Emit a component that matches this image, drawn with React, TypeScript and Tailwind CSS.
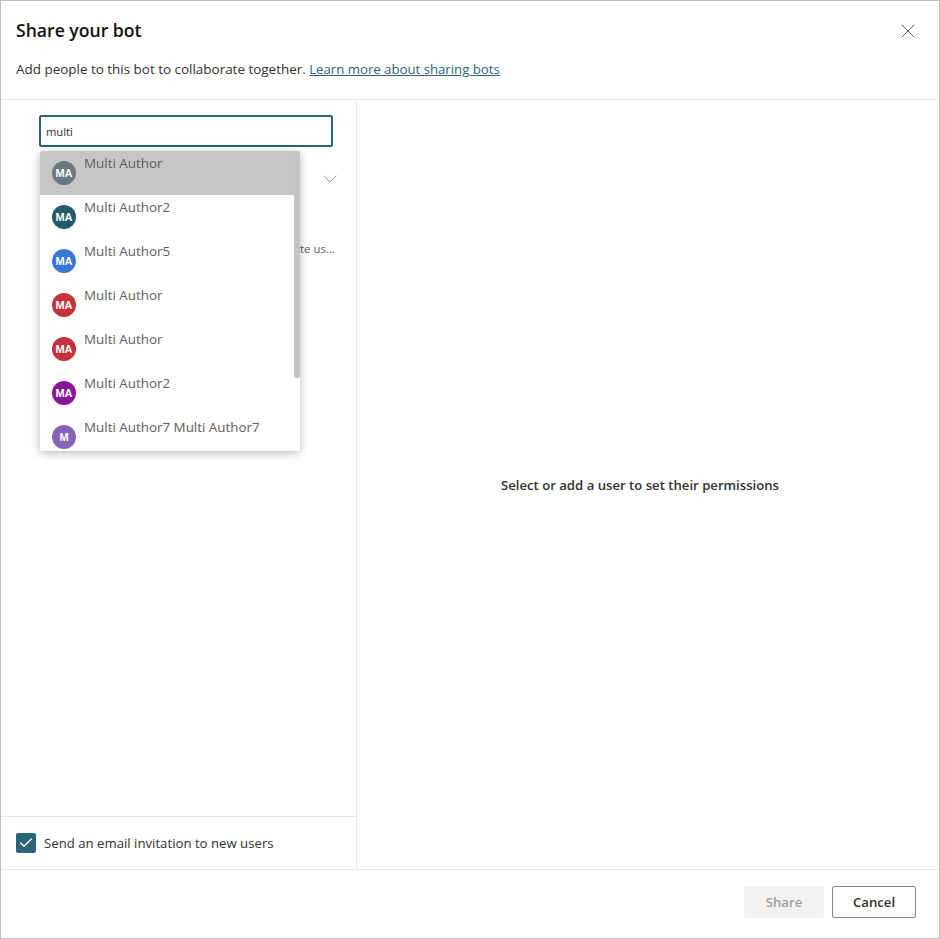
import React from 'react';
import { X, ChevronDown, Check } from 'lucide-react';

const people = [
  { name: 'Multi Author', initials: 'MA', color: 'bg-[#69797e]', active: true },
  { name: 'Multi Author2', initials: 'MA', color: 'bg-[#255a6c]' },
  { name: 'Multi Author5', initials: 'MA', color: 'bg-[#3a76d8]' },
  { name: 'Multi Author', initials: 'MA', color: 'bg-[#c4313b]' },
  { name: 'Multi Author', initials: 'MA', color: 'bg-[#c4313b]' },
  { name: 'Multi Author2', initials: 'MA', color: 'bg-[#881798]' },
  { name: 'Multi Author7 Multi Author7', initials: 'M', color: 'bg-[#8764b8]' },
];

function PeopleDropdown() {
  return (
    <div className="absolute left-[39px] top-[51px] z-10 h-[300px] w-[260px] overflow-hidden rounded-[2px] bg-white shadow-[0_2px_10px_rgba(0,0,0,0.28)]">
      {people.map((p, i) => (
        <div key={i} className={`flex h-[44px] w-[254px] ${p.active ? 'bg-[#c8c6c4]' : 'bg-white'}`}>
          <div className={`ml-[12px] mt-[10px] flex h-[24px] w-[24px] items-center justify-center rounded-full text-[11px] font-bold text-white font-['Liberation_Sans',sans-serif] ${p.color}`}>
            {p.initials}
          </div>
          <div className="ml-[8px] text-[13.4px] leading-[24px] text-[#605e5c]">{p.name}</div>
        </div>
      ))}
      <div className="absolute right-0 top-0 h-[227px] w-[6px] rounded-b-[3px] bg-[#c4c4c4]" />
    </div>
  );
}

export default function App() {
  return (
    <div className="flex h-[939px] w-[940px] flex-col border border-[#bdbdbd] bg-white font-['Open_Sans',sans-serif] text-[#323130]">
      <header className="relative h-[99px] shrink-0 border-b border-[#e8e8e8] px-[15px]">
        <h1 className="pt-[15px] text-[17.6px] font-semibold leading-[28px] text-[#11100f]">Share your bot</h1>
        <p className="mt-[15px] text-[13.44px] leading-[20px]">
          Add people to this bot to collaborate together.{' '}
          <a className="text-[13.2px] text-[#2b6479] underline">Learn more about sharing bots</a>
        </p>
        <button className="absolute right-[19px] top-[18px] text-[#605e5c]">
          <X size={24} strokeWidth={1} className="block" />
        </button>
      </header>

      <main className="flex min-h-0 flex-1">
        <aside className="relative flex w-[356px] shrink-0 flex-col border-r border-[#e8e8e8]">
          <div className="flex-1">
            <div className="ml-[38px] mt-[15px] flex h-[32px] w-[294px] items-center rounded-[2px] border-2 border-[#2b6479] px-[5px] pt-[2px] text-[11.2px] text-[#323130]">
              multi
            </div>
            <ChevronDown className="absolute left-[317px] top-[67px] text-[#a5866f]" size={24} strokeWidth={1} />
            <div className="absolute left-[299px] top-[140px] text-[11.4px] leading-[18px] text-[#605e5c]">te us...</div>
          </div>
          <PeopleDropdown />
          <div className="flex h-[53px] items-center border-t border-[#e8e8e8] px-[15px]">
            <span className="mb-[1px] flex h-[20px] w-[20px] items-center justify-center rounded-[2px] bg-[#2b6479] text-white">
              <Check size={16} strokeWidth={2} />
            </span>
            <span className="ml-[8px] pt-[1px] text-[13.2px] text-[#323130]">Send an email invitation to new users</span>
          </div>
        </aside>
        <section className="flex flex-1 items-start justify-center pt-[375px]">
          <p className="pr-[16px] text-[13.15px] font-semibold leading-[20px] text-[#323130]">Select or add a user to set their permissions</p>
        </section>
      </main>

      <footer className="flex h-[69px] shrink-0 items-start justify-end gap-[8px] border-t border-[#e8e8e8] pr-[23px] pt-[16px]">
        <button className="h-[32px] w-[80px] rounded-[2px] bg-[#f3f2f1] pt-[1px] text-[13.2px] font-semibold text-[#a19f9d]">Share</button>
        <button className="h-[32px] w-[84px] rounded-[2px] border border-[#8a8886] bg-white pt-[1px] text-[13.2px] font-semibold text-[#323130]">Cancel</button>
      </footer>
    </div>
  );
}
